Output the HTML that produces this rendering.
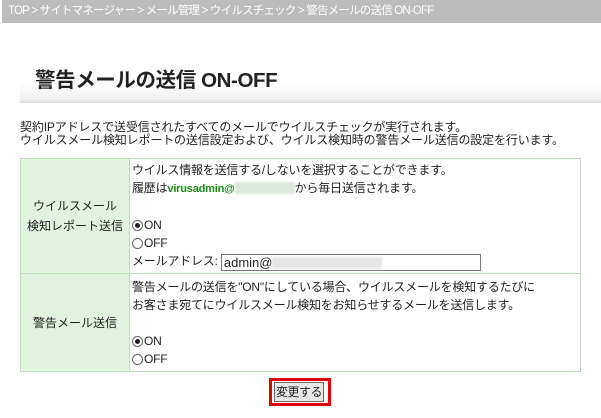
<!DOCTYPE html>
<html><head><meta charset="utf-8"><style>
body{margin:0;width:601px;height:418px;background:#fff;font-family:"Liberation Sans","Noto Sans CJK JP",sans-serif;font-size:12px;color:#222;position:relative;overflow:hidden}
.bc{position:absolute;left:2px;top:0;width:599px;height:23px;background:#bcbcbc;color:#fff;font-size:11.5px;letter-spacing:-0.8px;line-height:23px;padding-left:6px;box-sizing:border-box;white-space:nowrap}
.tt{position:absolute;left:20px;top:55px;width:581px;height:48px;background:linear-gradient(#fff 60%,#f0f0f0 92%,#ddd 100%)}
.tt h1{margin:0;position:absolute;left:15px;top:8px;font-size:20.5px;letter-spacing:-0.4px;font-weight:bold;color:#222;white-space:nowrap}
.desc{position:absolute;left:20px;top:121px;line-height:13px;font-size:12px;letter-spacing:-0.15px;white-space:nowrap}
table{position:absolute;left:20px;top:158px;width:561px;border-collapse:collapse}
td{border:1px solid #b8e2b8;font-size:12px;vertical-align:middle}
td.h{width:106px;background:#dff3df;text-align:center;line-height:20px}
td.c{padding:1px 2px;line-height:18px;letter-spacing:-0.2px;white-space:nowrap}
.r{display:inline-block;width:11px;height:11px;border:1px solid #666;border-radius:50%;vertical-align:-2px;box-sizing:border-box;position:relative;margin-right:1px}
.r.on::after{content:"";position:absolute;left:2px;top:2px;width:5px;height:5px;border-radius:50%;background:#222}
.g{color:#1a8a1a;font-weight:bold;font-size:11px}
.blur{display:inline-block;width:60px;height:12px;background:#dde8dd;vertical-align:-2px;filter:blur(1px)}
.inp{display:inline-block;width:256px;height:15px;border:1px solid #777;vertical-align:middle;font-size:13px;line-height:15px;padding-left:2px;box-sizing:content-box;letter-spacing:0}
.btn{position:absolute;left:269px;top:378px;width:56px;height:22px;border:3px solid #e00000}
.btn div{position:absolute;left:2px;top:1px;width:48px;height:18px;background:#e8e8e8;border:1px solid #666;font-size:12px;line-height:18px;text-align:center;white-space:nowrap;letter-spacing:-0.5px}
</style></head><body>
<div class="bc">TOP &gt; サイトマネージャー &gt; メール管理 &gt; ウイルスチェック &gt; 警告メールの送信 ON-OFF</div>
<div class="tt"><h1>警告メールの送信 ON-OFF</h1></div>
<div class="desc">契約IPアドレスで送受信されたすべてのメールでウイルスチェックが実行されます。<br>ウイルスメール検知レポートの送信設定および、ウイルス検知時の警告メール送信の設定を行います。</div>
<table>
<tr style="height:115px"><td class="h">ウイルスメール<br>検知レポート送信</td><td class="c">ウイルス情報を送信する/しないを選択することができます。<br>履歴は<span class="g">virusadmin@</span><span class="blur"></span>から毎日送信されます。<br><br><span class="r on"></span>ON<br><span class="r"></span>OFF<br>メールアドレス: <span class="inp">admin@<span class="blur" style="width:110px;background:#e6e6e6"></span></span></td></tr>
<tr style="height:98px"><td class="h">警告メール送信</td><td class="c">警告メールの送信を"ON"にしている場合、ウイルスメールを検知するたびに<br>お客さま宛てにウイルスメール検知をお知らせするメールを送信します。<br><br><span class="r on"></span>ON<br><span class="r"></span>OFF</td></tr>
</table>
<div class="btn"><div>変更する</div></div>
</body></html>
